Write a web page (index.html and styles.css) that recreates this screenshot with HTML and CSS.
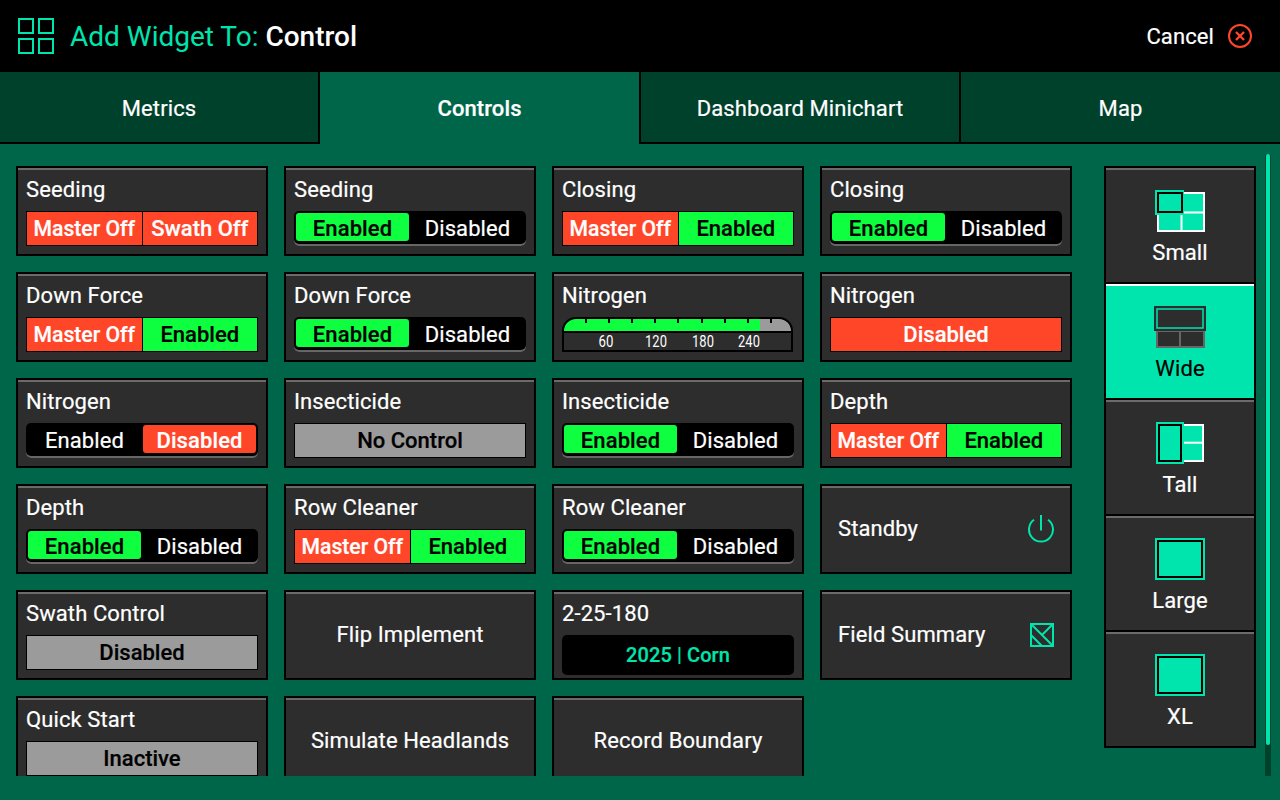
FILE: index.html
```html
<!DOCTYPE html>
<html lang="en">
<head>
<meta charset="utf-8">
<title>Add Widget</title>
<link rel="stylesheet" href="styles.css">
</head>
<body>
<header class="topbar">
  <svg class="head-icon" width="36" height="36" viewBox="0 0 36 36"><g fill="none" stroke="#00e5ae" stroke-width="2"><rect x="1" y="1" width="14" height="14"/><rect x="21" y="1" width="14" height="14"/><rect x="1" y="21" width="14" height="14"/><rect x="21" y="21" width="14" height="14"/></g></svg>
  <h1 class="title">Add Widget To: <b>Control</b></h1>
  <div class="cancel">Cancel
    <svg width="24" height="24" viewBox="0 0 24 24"><circle cx="12" cy="12" r="11" fill="none" stroke="#ff4629" stroke-width="2"/><path d="M8 8l8 8M16 8l-8 8" stroke="#ff4629" stroke-width="2.400" fill="none"/></svg>
  </div>
</header>
<nav class="tabs">
  <div class="tab">Metrics</div>
  <div class="tab active">Controls</div>
  <div class="tab">Dashboard Minichart</div>
  <div class="tab last">Map</div>
</nav>
<main class="body">
  <section class="grid">
    <div class="card"><div class="name">Seeding</div><div class="seg"><span class="red fit">Master Off</span><span class="red">Swath Off</span></div></div>
    <div class="card"><div class="name">Seeding</div><div class="tog"><span class="green">Enabled</span><span class="off">Disabled</span></div></div>
    <div class="card"><div class="name">Closing</div><div class="seg"><span class="red fit">Master Off</span><span class="green">Enabled</span></div></div>
    <div class="card"><div class="name">Closing</div><div class="tog"><span class="green">Enabled</span><span class="off">Disabled</span></div></div>

    <div class="card"><div class="name">Down Force</div><div class="seg"><span class="red fit">Master Off</span><span class="green">Enabled</span></div></div>
    <div class="card"><div class="name">Down Force</div><div class="tog"><span class="green">Enabled</span><span class="off">Disabled</span></div></div>
    <div class="card"><div class="name">Nitrogen</div>
      <svg class="gauge" width="231" height="35" viewBox="0 0 231 35">
        <path d="M1 15V14A13 13 0 0 1 14 1H217A13 13 0 0 1 230 14V15Z" fill="#9b9b9b"/>
        <path d="M1 15V14A13 13 0 0 1 14 1H198V15Z" fill="#0dff3f"/>
        <path d="M1 15V14A13 13 0 0 1 14 1H217A13 13 0 0 1 230 14V15" fill="none" stroke="#000" stroke-width="2"/>
        <rect x="1" y="15" width="229" height="19" fill="#2d2d2d" stroke="#000" stroke-width="2"/>
        <path d="M24 1v5M47 1v5M70 1v5M93 1v5M116 1v5M140 1v5M163 1v5M186 1v5M209 1v5" stroke="#000" stroke-width="2"/>
        <g class="gauge-num" text-anchor="middle"><text x="44" y="30" textLength="15" lengthAdjust="spacingAndGlyphs">60</text><text x="94" y="30" textLength="22" lengthAdjust="spacingAndGlyphs">120</text><text x="141" y="30" textLength="22" lengthAdjust="spacingAndGlyphs">180</text><text x="187" y="30" textLength="22" lengthAdjust="spacingAndGlyphs">240</text></g>
      </svg>
    </div>
    <div class="card"><div class="name">Nitrogen</div><div class="seg"><span class="red">Disabled</span></div></div>

    <div class="card"><div class="name">Nitrogen</div><div class="tog"><span>Enabled</span><span class="red">Disabled</span></div></div>
    <div class="card"><div class="name">Insecticide</div><div class="seg"><span class="gray">No Control</span></div></div>
    <div class="card"><div class="name">Insecticide</div><div class="tog"><span class="green">Enabled</span><span class="off">Disabled</span></div></div>
    <div class="card"><div class="name">Depth</div><div class="seg"><span class="red fit">Master Off</span><span class="green">Enabled</span></div></div>

    <div class="card"><div class="name">Depth</div><div class="tog"><span class="green">Enabled</span><span class="off">Disabled</span></div></div>
    <div class="card"><div class="name">Row Cleaner</div><div class="seg"><span class="red fit">Master Off</span><span class="green">Enabled</span></div></div>
    <div class="card"><div class="name">Row Cleaner</div><div class="tog"><span class="green">Enabled</span><span class="off">Disabled</span></div></div>
    <div class="card action">Standby
      <svg width="28" height="30" viewBox="0 0 28 30"><path d="M8 6.800A12 12 0 1 0 22 6.800M15 2V17.500" fill="none" stroke="#00e5ae" stroke-width="2"/></svg>
    </div>

    <div class="card"><div class="name">Swath Control</div><div class="seg"><span class="gray">Disabled</span></div></div>
    <div class="card center">Flip Implement</div>
    <div class="card"><div class="name">2-25-180</div><div class="season">2025 <i>|</i> Corn</div></div>
    <div class="card action">Field Summary
      <svg class="field" width="24" height="24" viewBox="0 0 24 24"><path d="M1 1H23V23H1ZM1 1L23 23M12 12L22 2M1 12L12 23" fill="none" stroke="#00e5ae" stroke-width="2"/></svg>
    </div>

    <div class="card"><div class="name">Quick Start</div><div class="seg"><span class="gray">Inactive</span></div></div>
    <div class="card center">Simulate Headlands</div>
    <div class="card center">Record Boundary</div>
  </section>

  <aside class="sizes">
    <div class="size">
      <svg width="52" height="44" viewBox="0 0 52 44"><rect x="4" y="3" width="46" height="38" fill="#00e5ae" stroke="#fff" stroke-width="2"/><path d="M27.500 3V41M4 22.500H50" stroke="#fff" stroke-width="2"/><rect x="2" y="1" width="27" height="23" fill="#00e5ae" stroke="#00e5ae" stroke-width="2"/><rect x="4" y="3" width="24" height="19" fill="#00e5ae" stroke="#000" stroke-width="2"/></svg>
      Small
    </div>
    <div class="size on">
      <svg width="52" height="44" viewBox="0 0 52 44"><rect x="3" y="25" width="47" height="16" fill="#2d2d2d" stroke="#666" stroke-width="2"/><path d="M26 25V41" stroke="#666" stroke-width="2"/><rect x="0" y="0" width="52" height="25" fill="#2d2d2d"/><rect x="3" y="3" width="46" height="19" fill="#2d2d2d" stroke="#00e5ae" stroke-width="1.500"/></svg>
      Wide
    </div>
    <div class="size">
      <svg width="52" height="44" viewBox="0 0 52 44"><rect x="4" y="3" width="45" height="36" fill="#00e5ae" stroke="#fff" stroke-width="2"/><path d="M30 20.700H49" stroke="#fff" stroke-width="2"/><rect x="3" y="1" width="26" height="40" fill="#00e5ae" stroke="#00e5ae" stroke-width="2"/><rect x="5" y="3" width="22" height="36" fill="#00e5ae" stroke="#000" stroke-width="2"/></svg>
      Tall
    </div>
    <div class="size">
      <svg width="52" height="44" viewBox="0 0 52 44"><rect x="2" y="1" width="48" height="40" fill="#000" stroke="#00e5ae" stroke-width="2"/><rect x="5" y="4" width="42" height="34" fill="#00e5ae"/></svg>
      Large
    </div>
    <div class="size">
      <svg width="52" height="44" viewBox="0 0 52 44"><rect x="2" y="1" width="48" height="40" fill="#000" stroke="#00e5ae" stroke-width="2"/><rect x="5" y="4" width="42" height="34" fill="#00e5ae"/></svg>
      XL
    </div>
  </aside>
  <div class="scrollbar"><div class="thumb"></div></div>
</main>
</body>
</html>
```

FILE: styles.css
```css
* { box-sizing: border-box; }
html, body { margin: 0; height: 800px; overflow: hidden; }
body {
  background: #00664a;
  color: #fff;
  font-family: Roboto, "Liberation Sans", sans-serif;
  font-size: 22px;
  letter-spacing: .1px;
  -webkit-text-stroke: .2px;
}
.topbar {
  height: 72px;
  background: #000;
  display: flex;
  align-items: center;
  padding: 0 28px 0 18px;
}
.head-icon { flex: none; }
.title {
  margin: 0 0 0 16px;
  font-size: 28px;
  font-weight: 400;
  letter-spacing: 0;
  -webkit-text-stroke: 0;
  color: #00e5ae;
}
.title b { color: #fff; font-weight: 500; }
.cancel {
  margin-left: auto;
  display: flex;
  align-items: center;
  gap: 14px;
}
.tabs { display: grid; grid-template-columns: 320px 321px 320px 319px; height: 72px; }
.tab {
  display: flex;
  align-items: center;
  justify-content: center;
  padding-top: 2px;
  background: #00412c;
  border-right: 2px solid #000;
  border-bottom: 2px solid #000;
}
.tab.active { background: #00664a; border-bottom: 0; padding-top: 0; font-weight: 500; }
.tab.last { border-right: 0; }
.body {
  position: relative;
  height: 632px;
  overflow: hidden;
  display: flex;
  align-items: flex-start;
  padding: 22px 0 0 16px;
}
.grid {
  display: grid;
  grid-template-columns: repeat(4, 252px);
  grid-auto-rows: 90px;
  gap: 16px;
  flex: none;
}
.card {
  background: #2d2d2d;
  border: 2px solid #000;
  box-shadow: inset 0 2px 0 #6b6b6b;
  padding: 8px;
  display: flex;
  flex-direction: column;
  justify-content: space-between;
}
.name { line-height: 28px; }
.seg {
  display: flex;
  height: 35px;
  border: 1px solid #000;
  gap: 1px;
  background: #000;
  font-weight: 500;
  letter-spacing: 0;
}
.seg span, .tog span {
  flex: 1 1 0;
  display: flex;
  align-items: center;
  justify-content: center;
  white-space: nowrap;
}
.tog {
  display: grid;
  grid-template-columns: 113px 115px;
  height: 35px;
  background: #000;
  border-radius: 5px;
  padding: 2px 2px 5px;
  box-shadow: inset 0 -2px 0 #666;
}
.tog span { border-radius: 3px; padding-top: 2px; }
.tog .off { padding-left: 2px; }
.tog .red { margin-left: 2px; }
.red { background: #ff4629; color: #fff; font-weight: 500; }
.fit { font-size: 21.200px; }
.green { background: #0dff3f; color: #000; font-weight: 500; }
.gray { background: #9b9b9b; color: #000; font-weight: 500; }
.gauge { display: block; }
.gauge-num text { font-size: 16px; fill: #fff; -webkit-text-stroke: 0; }
.season {
  height: 40px;
  margin-bottom: -5px;
  background: #000;
  border-radius: 5px;
  display: flex;
  align-items: center;
  justify-content: center;
  color: #00e5ae;
  font-size: 20px;
  font-weight: 500;
  white-space: pre;
}
.season i { font-style: normal; font-weight: 400; }
.center {
  align-items: center;
  justify-content: center;
  padding-bottom: 10px;
}
.action {
  flex-direction: row;
  align-items: center;
  justify-content: space-between;
  padding: 0 16px 2px;
}
.field { margin-top: 2px; }
.sizes {
  flex: none;
  margin-left: 32px;
  width: 152px;
  height: 582px;
  background: #000;
  border: 2px solid #000;
  display: flex;
  flex-direction: column;
  gap: 2px;
}
.size {
  flex: 1 1 0;
  background: #2d2d2d;
  box-shadow: inset 0 2px 0 #6b6b6b;
  display: flex;
  flex-direction: column;
  align-items: center;
  padding-top: 22px;
  gap: 6px;
}
.size svg { display: block; }
.size.on { background: #00e5ae; color: #000; box-shadow: inset 0 2px 0 #fff; }
.scrollbar {
  position: absolute;
  left: 1265px;
  top: 10px;
  width: 6px;
  height: 636px;
  background: #00412c;
  border-radius: 3px;
}
.thumb {
  margin: 0 1px;
  height: 591px;
  background: #00e5ae;
  border-radius: 2px;
}
```
